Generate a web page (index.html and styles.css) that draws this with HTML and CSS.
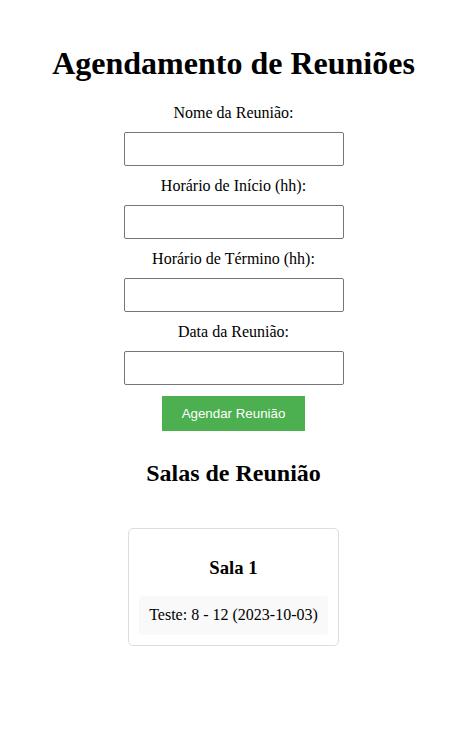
FILE: index.html
```html
<!DOCTYPE html>
<html lang="pt">
<head>
<meta charset="utf-8">
<title>Agendamento de Reuniões</title>
<link rel="stylesheet" href="styles.css">
</head>
<body>
<div class="page">
  <h1 class="title">Agendamento de Reuniões</h1>
  <form class="form">
    <label class="label">Nome da Reunião:</label>
    <input class="field" type="text">
    <label class="label">Horário de Início (hh):</label>
    <input class="field" type="text">
    <label class="label">Horário de Término (hh):</label>
    <input class="field" type="text">
    <label class="label">Data da Reunião:</label>
    <input class="field" type="text">
    <button class="btn" type="button">Agendar Reunião</button>
  </form>
  <h2 class="subtitle">Salas de Reunião</h2>
  <div class="rooms">
    <div class="card">
      <h3 class="card-title">Sala 1</h3>
      <div class="item">Teste: 8 - 12 (2023-10-03)</div>
    </div>
  </div>
</div>
</body>
</html>
```

FILE: styles.css
```css
html, body {
  background: #fff;
}
body {
  margin: 8px;
  font-family: "Liberation Serif", "Times New Roman", serif;
  font-size: 16px;
  color: #000;
}
.page {
  text-align: center;
  padding: 16px 0 0 4px;
}
.title {
  font-size: 32px;
  font-weight: bold;
  margin: 21.44px 0;
  line-height: 1.15;
}
.form {
  margin: 0;
}
.label {
  display: block;
  line-height: 1.15;
}
.field {
  display: block;
  box-sizing: border-box;
  width: 220px;
  height: 34px;
  margin: 10.3px auto;
  border: 1px solid #767676;
  border-radius: 2px;
  padding: 0 8px;
  background: #fff;
}
.btn {
  display: block;
  margin: 11px auto 0;
  background: #4caf50;
  color: #fff;
  border: none;
  padding: 10px 20px;
  font-family: "Liberation Sans", Arial, sans-serif;
  font-size: 13.33px;
  line-height: 15px;
}
.subtitle {
  font-size: 24px;
  font-weight: bold;
  margin: 29px 0 0;
  line-height: 1.15;
}
.rooms {
  padding-top: 40px;
}
.card {
  display: inline-block;
  border: 1px solid #ddd;
  border-radius: 5px;
  padding: 10px;
  text-align: center;
}
.card-title {
  font-size: 18.72px;
  font-weight: bold;
  margin: 18px 0;
  line-height: 1.15;
}
.item {
  background: #f9f9f9;
  border-radius: 4px;
  padding: 10px;
  line-height: 1.15;
}
```
